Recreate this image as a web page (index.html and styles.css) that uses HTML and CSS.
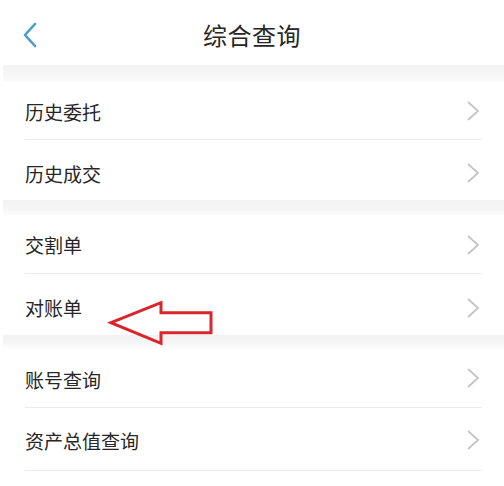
FILE: index.html
```html
<!DOCTYPE html>
<html lang="zh-CN">
<head>
  <meta charset="UTF-8" />
  <title>综合查询</title>
  <meta name="viewport" content="width=device-width, initial-scale=1.0" />
  <link rel="stylesheet" href="styles.css">
</head>
<body>
  <div class="page">
    <header class="topbar">
      <span class="back">
        <svg width="16" height="26" viewBox="0 0 16 26"><path d="M13 2 L3 13 L13 24" fill="none" stroke="#4a9ccc" stroke-width="2.6" stroke-linecap="round" stroke-linejoin="round"/></svg>
      </span>
      <h1 class="title">综合查询</h1>
    </header>

    <div class="band band-a"></div>
    <ul class="group">
      <li class="row r1"><span>历史委托</span><svg class="chev" viewBox="0 0 14 22"><path d="M2 2 L12 11 L2 20"/></svg></li>
      <li class="row r2"><span>历史成交</span><svg class="chev" viewBox="0 0 14 22"><path d="M2 2 L12 11 L2 20"/></svg></li>
    </ul>

    <div class="band band-b"></div>
    <ul class="group">
      <li class="row r3"><span>交割单</span><svg class="chev" viewBox="0 0 14 22"><path d="M2 2 L12 11 L2 20"/></svg></li>
      <li class="row r4"><span>对账单</span><svg class="chev" viewBox="0 0 14 22"><path d="M2 2 L12 11 L2 20"/></svg></li>
    </ul>

    <div class="band band-c"></div>
    <ul class="group">
      <li class="row r5"><span>账号查询</span><svg class="chev" viewBox="0 0 14 22"><path d="M2 2 L12 11 L2 20"/></svg></li>
      <li class="row r6"><span>资产总值查询</span><svg class="chev" viewBox="0 0 14 22"><path d="M2 2 L12 11 L2 20"/></svg></li>
    </ul>

    <!-- red annotation arrow -->
    <svg class="mark" width="110" height="50" viewBox="105 298 110 50">
      <path d="M111 322.7 L161 302.7 L161 312.7 L211 312.7 L211 332.7 L161 332.7 L161 343.3 Z" fill="none" stroke="#d8262c" stroke-width="3" stroke-linejoin="miter"/>
    </svg>
  </div>
</body>
</html>
```

FILE: styles.css
```css
* { box-sizing: border-box; margin: 0; padding: 0 }
html, body {
  width: 100%; height: 100%;
  background: #fff;
  font-family: "Noto Sans CJK SC", "Noto Sans", sans-serif;
  color: #222;
}

.page {
  position: relative;
  width: 504px; height: 486px;
  overflow: hidden;
}

/*–––– Top bar ––––*/
.topbar {
  height: 65px;
  display: flex; align-items: center; justify-content: center;
  position: relative;
}
.back {
  position: absolute; left: 22px; top: 22px;
  display: flex;
}
.title {
  font-size: 24px;
  font-weight: 400;
  color: #262626;
  letter-spacing: 0.5px;
  margin-top: 4px;
}

/*–––– Separators ––––*/
.band {
  margin-left: 3px;
  background: linear-gradient(180deg, #f2f2f2, #f6f6f6 60%, #fcfcfc);
}
.band-a { height: 17px }
.band-b { height: 15px }
.band-c { height: 13px }

/*–––– Rows ––––*/
.group { list-style: none }
.row {
  display: flex; align-items: center; justify-content: space-between;
  padding: 0 24px 0 25px;
  font-size: 19px;
  color: #262626;
  position: relative;
}
.row::after {
  content: '';
  position: absolute; left: 25px; right: 22px; bottom: 0;
  height: 1px;
  background: #ececec;
}
.r2::after, .r4::after { display: none }
.r1 { height: 58px }
.r2 { height: 60px; padding-top: 6px }
.r3 { height: 59px }
.r4 { height: 61px; padding-top: 6px }
.r5 { height: 60px }
.r6 { height: 63px }
.r5 span, .r6 span { margin-top: 2px }

.chev {
  width: 14px; height: 22px;
  fill: none;
  stroke: #c4c4c4;
  stroke-width: 1.8;
  stroke-linejoin: miter;
}

/*–––– Annotation ––––*/
.mark {
  position: absolute; left: 105px; top: 298px;
  pointer-events: none;
}
```
